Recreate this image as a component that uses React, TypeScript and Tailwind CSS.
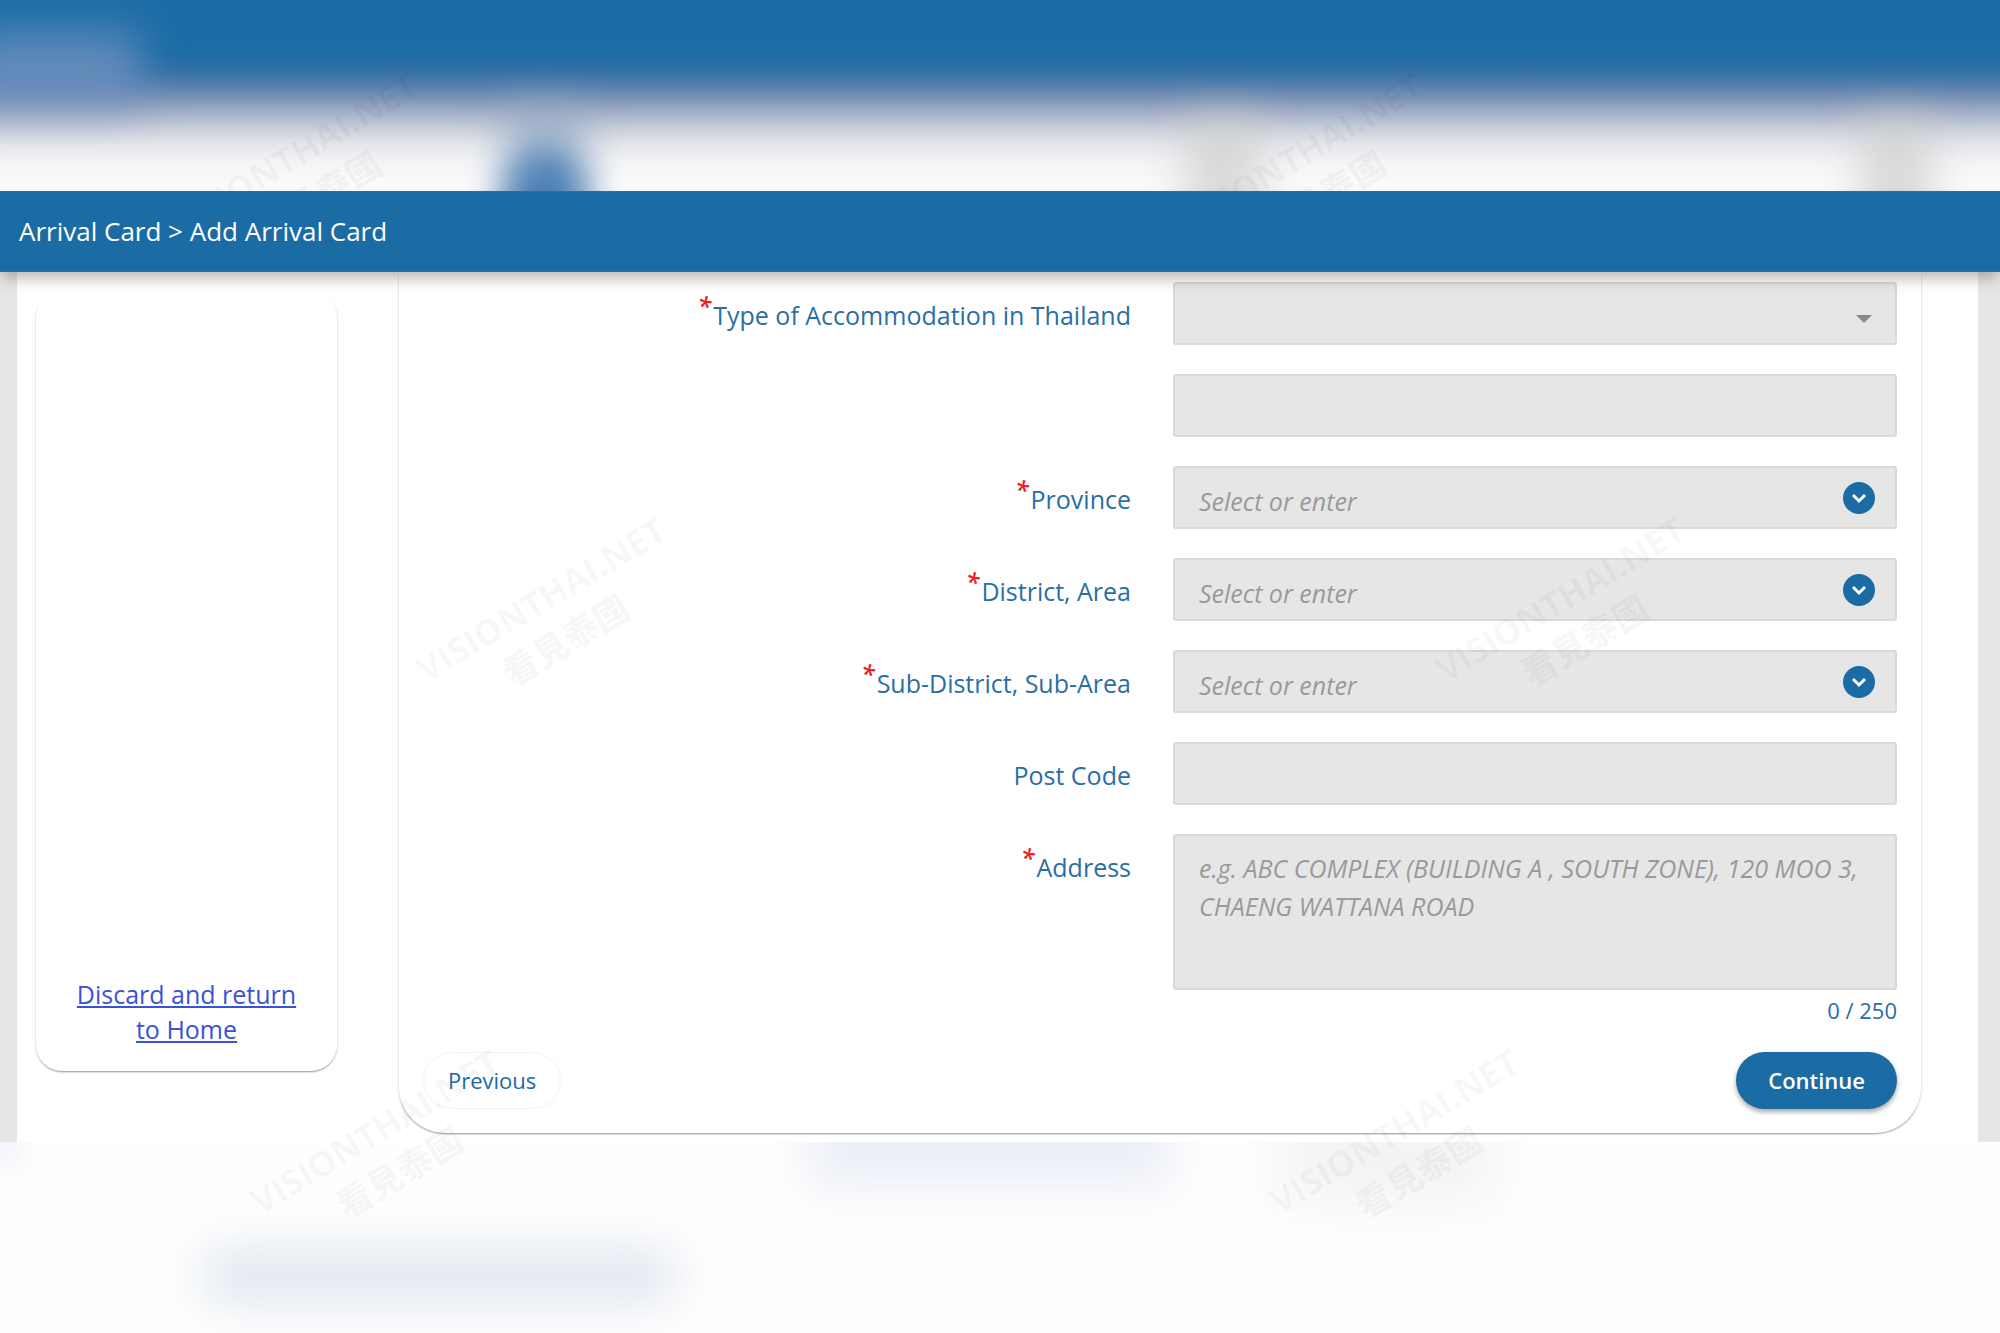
import React, { useState } from 'react';

interface FieldRowProps {
  label: string;
  htmlFor: string;
  required?: boolean;
  children: React.ReactNode;
}

const boxClass =
  'block w-full rounded-[3px] border-2 border-[#d9d9d9] bg-[#e6e6e6] px-6 text-[25px] text-[#555] placeholder:italic placeholder:text-[#9a9a9a] outline-none';

const FieldRow: React.FC<FieldRowProps> = ({ label, htmlFor, required, children }) => (
  <div className="grid grid-cols-[708fr_724fr] items-start gap-x-[42px]">
    <label htmlFor={htmlFor} className="flex items-start justify-end pt-4 text-[25px] leading-[35px] text-[#2a6ea3]">
      {required && <span className="-mt-2 mr-0.5 text-[25px] leading-[33px] font-semibold text-[#f0201c] italic">*</span>}
      {label}
    </label>
    {children}
  </div>
);

const ComboField = ({ id, label }: { id: string; label: string }) => (
  <FieldRow label={label} htmlFor={id} required>
    <div className="relative">
      <input id={id} type="text" placeholder="Select or enter" className={`${boxClass} h-[63px] pt-1.5`} />
      <button
        type="button"
        aria-label={`Open ${label}`}
        className="absolute inset-y-0 right-[22px] my-auto flex h-8 w-8 items-center justify-center rounded-full bg-[#1b6ca5]"
      >
        <svg viewBox="0 0 32 32" className="h-8 w-8" fill="none" stroke="#fff" strokeWidth="3">
          <path d="M10 13l6 6 6-6" />
        </svg>
      </button>
    </div>
  </FieldRow>
);

const Watermark = ({ place }: { place: string }) => (
  <div
    className={`pointer-events-none absolute z-10 w-[320px] -rotate-[31deg] text-center text-[35px] leading-[46px] font-bold whitespace-nowrap text-[#00000009] ${place}`}
  >
    <div>VISIONTHAI.NET</div>
    <div className="font-['Noto_Sans_CJK_TC',sans-serif] font-black">看見泰國</div>
  </div>
);

const cardShadow =
  'shadow-[0_2px_2px_-1px_rgba(0,0,0,0.4),2px_1px_2px_-1px_rgba(0,0,0,0.08),-2px_1px_2px_-1px_rgba(0,0,0,0.08)]';

export default function App() {
  const [address, setAddress] = useState('');

  return (
    <div className="relative flex min-h-screen flex-col overflow-hidden bg-[#fefefe] font-['Open_Sans',sans-serif]">
      {/* out of focus page behind the form */}
      <div className="relative h-[191px] shrink-0 overflow-hidden bg-[linear-gradient(to_bottom,#1b6ca5_0px,#1c6ca6_52px,#3070a5_70px,#527dae_84px,#7891b4_97px,#a3afc6_112px,#c8cdd9_128px,#e4e6ea_144px,#f4f4f6_162px,#fdfdfd_191px)]">
        <div className="absolute -left-10 top-8 h-[74px] w-[180px] bg-[#7394c0]/80 blur-[22px]"></div>
        <div className="absolute left-[505px] top-[100px] h-36 w-[80px] bg-[#8da5c4]/50 blur-[20px]"></div>
        <div className="absolute left-[505px] top-[146px] h-24 w-[80px] rounded-full bg-[#3f78b0]/90 blur-[18px]"></div>
        <div className="absolute left-[1185px] top-[120px] h-36 w-[76px] bg-[#cccccc]/70 blur-[22px]"></div>
        <div className="absolute left-[1860px] top-[120px] h-36 w-[72px] bg-[#cccccc]/70 blur-[22px]"></div>
      </div>

      <header className="relative z-20 flex h-[81px] shrink-0 items-center border-y border-[#3b6a8c] bg-[#1b6ca5] px-[19px] text-[26px] leading-[35px] font-medium text-white shadow-[0_8px_14px_-2px_rgba(60,40,20,0.35)]">
        <nav aria-label="Breadcrumb">Arrival Card &gt; Add Arrival Card</nav>
      </header>

      <div className="shrink-0 bg-[#e6e6e6] pl-[17px] pr-[22px]">
        <div className="flex items-start gap-[62px] bg-white pb-[9px] pl-[19px] pr-[57px]">
          <aside className={`mt-[18px] flex h-[781px] w-[301px] shrink-0 flex-col justify-end rounded-[26px] px-6 pb-6 text-center ${cardShadow}`}>
            <a href="#home" className="text-[25px] leading-[35px] text-[#3a52d6] underline underline-offset-2">
              Discard and return
              <br />
              to Home
            </a>
          </aside>

          <main className={`min-w-0 flex-1 rounded-b-[46px] px-6 pt-[10px] pb-6 ${cardShadow}`}>
            <form onSubmit={(e) => e.preventDefault()}>
              <div className="flex flex-col gap-[29px]">
                <FieldRow label="Type of Accommodation in Thailand" htmlFor="accommodation" required>
                  <div className="relative">
                    <select id="accommodation" defaultValue="" className={`${boxClass} h-[63px] appearance-none`}>
                      <option value=""></option>
                    </select>
                    <svg viewBox="0 0 16 8" className="pointer-events-none absolute right-[25px] top-[33px] h-2 w-4 fill-[#8a8a8a]">
                      <path d="M0 0h16l-8 8z" />
                    </svg>
                  </div>
                </FieldRow>
                <FieldRow label="" htmlFor="accommodation-other">
                  <input id="accommodation-other" type="text" aria-label="Other accommodation" className={`${boxClass} h-[63px]`} />
                </FieldRow>
                <ComboField id="province" label="Province" />
                <ComboField id="district" label="District, Area" />
                <ComboField id="sub-district" label="Sub-District, Sub-Area" />
                <FieldRow label="Post Code" htmlFor="post-code">
                  <input id="post-code" type="text" className={`${boxClass} h-[63px]`} />
                </FieldRow>
                <FieldRow label="Address" htmlFor="address" required>
                  <div>
                    <textarea
                      id="address"
                      maxLength={250}
                      value={address}
                      onChange={(e) => setAddress(e.target.value)}
                      placeholder="e.g. ABC COMPLEX (BUILDING A , SOUTH ZONE), 120 MOO 3, CHAENG WATTANA ROAD"
                      className={`${boxClass} h-[156px] resize-none pt-[13px] leading-[38px]`}
                    />
                    <p className="pt-1 pb-0.5 text-right text-[22px] leading-8 text-[#2a6ea3]">{address.length} / 250</p>
                  </div>
                </FieldRow>
              </div>

              <div className="mt-6 flex items-center justify-between">
                <button type="button" className="h-[57px] rounded-full border border-[#f4f4f4] px-6 text-[22px] text-[#1b6ca5]">
                  Previous
                </button>
                <button
                  type="submit"
                  className="h-[57px] rounded-full bg-[#1b6ca5] px-8 text-[22px] font-semibold text-white shadow-[0_3px_5px_rgba(0,0,0,0.35)]"
                >
                  Continue
                </button>
              </div>
            </form>
          </main>
        </div>
      </div>

      <div className="relative min-h-[191px] flex-1 overflow-hidden bg-[#fefefe]">
        <div className="absolute -left-8 -top-4 h-9 w-12 bg-[#eeeefb] blur-[16px]"></div>
        <div className="absolute left-[810px] -top-6 h-[66px] w-[360px] bg-[#e8ecf5] blur-[24px]"></div>
        <div className="absolute left-[1280px] -top-6 h-[84px] w-[215px] bg-[#f3f3f3] blur-[24px]"></div>
        <div className="absolute left-[205px] top-[110px] h-[48px] w-[468px] bg-[#dce3ed] blur-[24px]"></div>
      </div>

      <Watermark place="left-[145px] top-[129px]" />
      <Watermark place="left-[1150px] top-[129px]" />
      <Watermark place="left-[393px] top-[573px]" />
      <Watermark place="left-[1412px] top-[573px]" />
      <Watermark place="left-[227px] top-[1105px]" />
      <Watermark place="left-[1246px] top-[1105px]" />
    </div>
  );
}
